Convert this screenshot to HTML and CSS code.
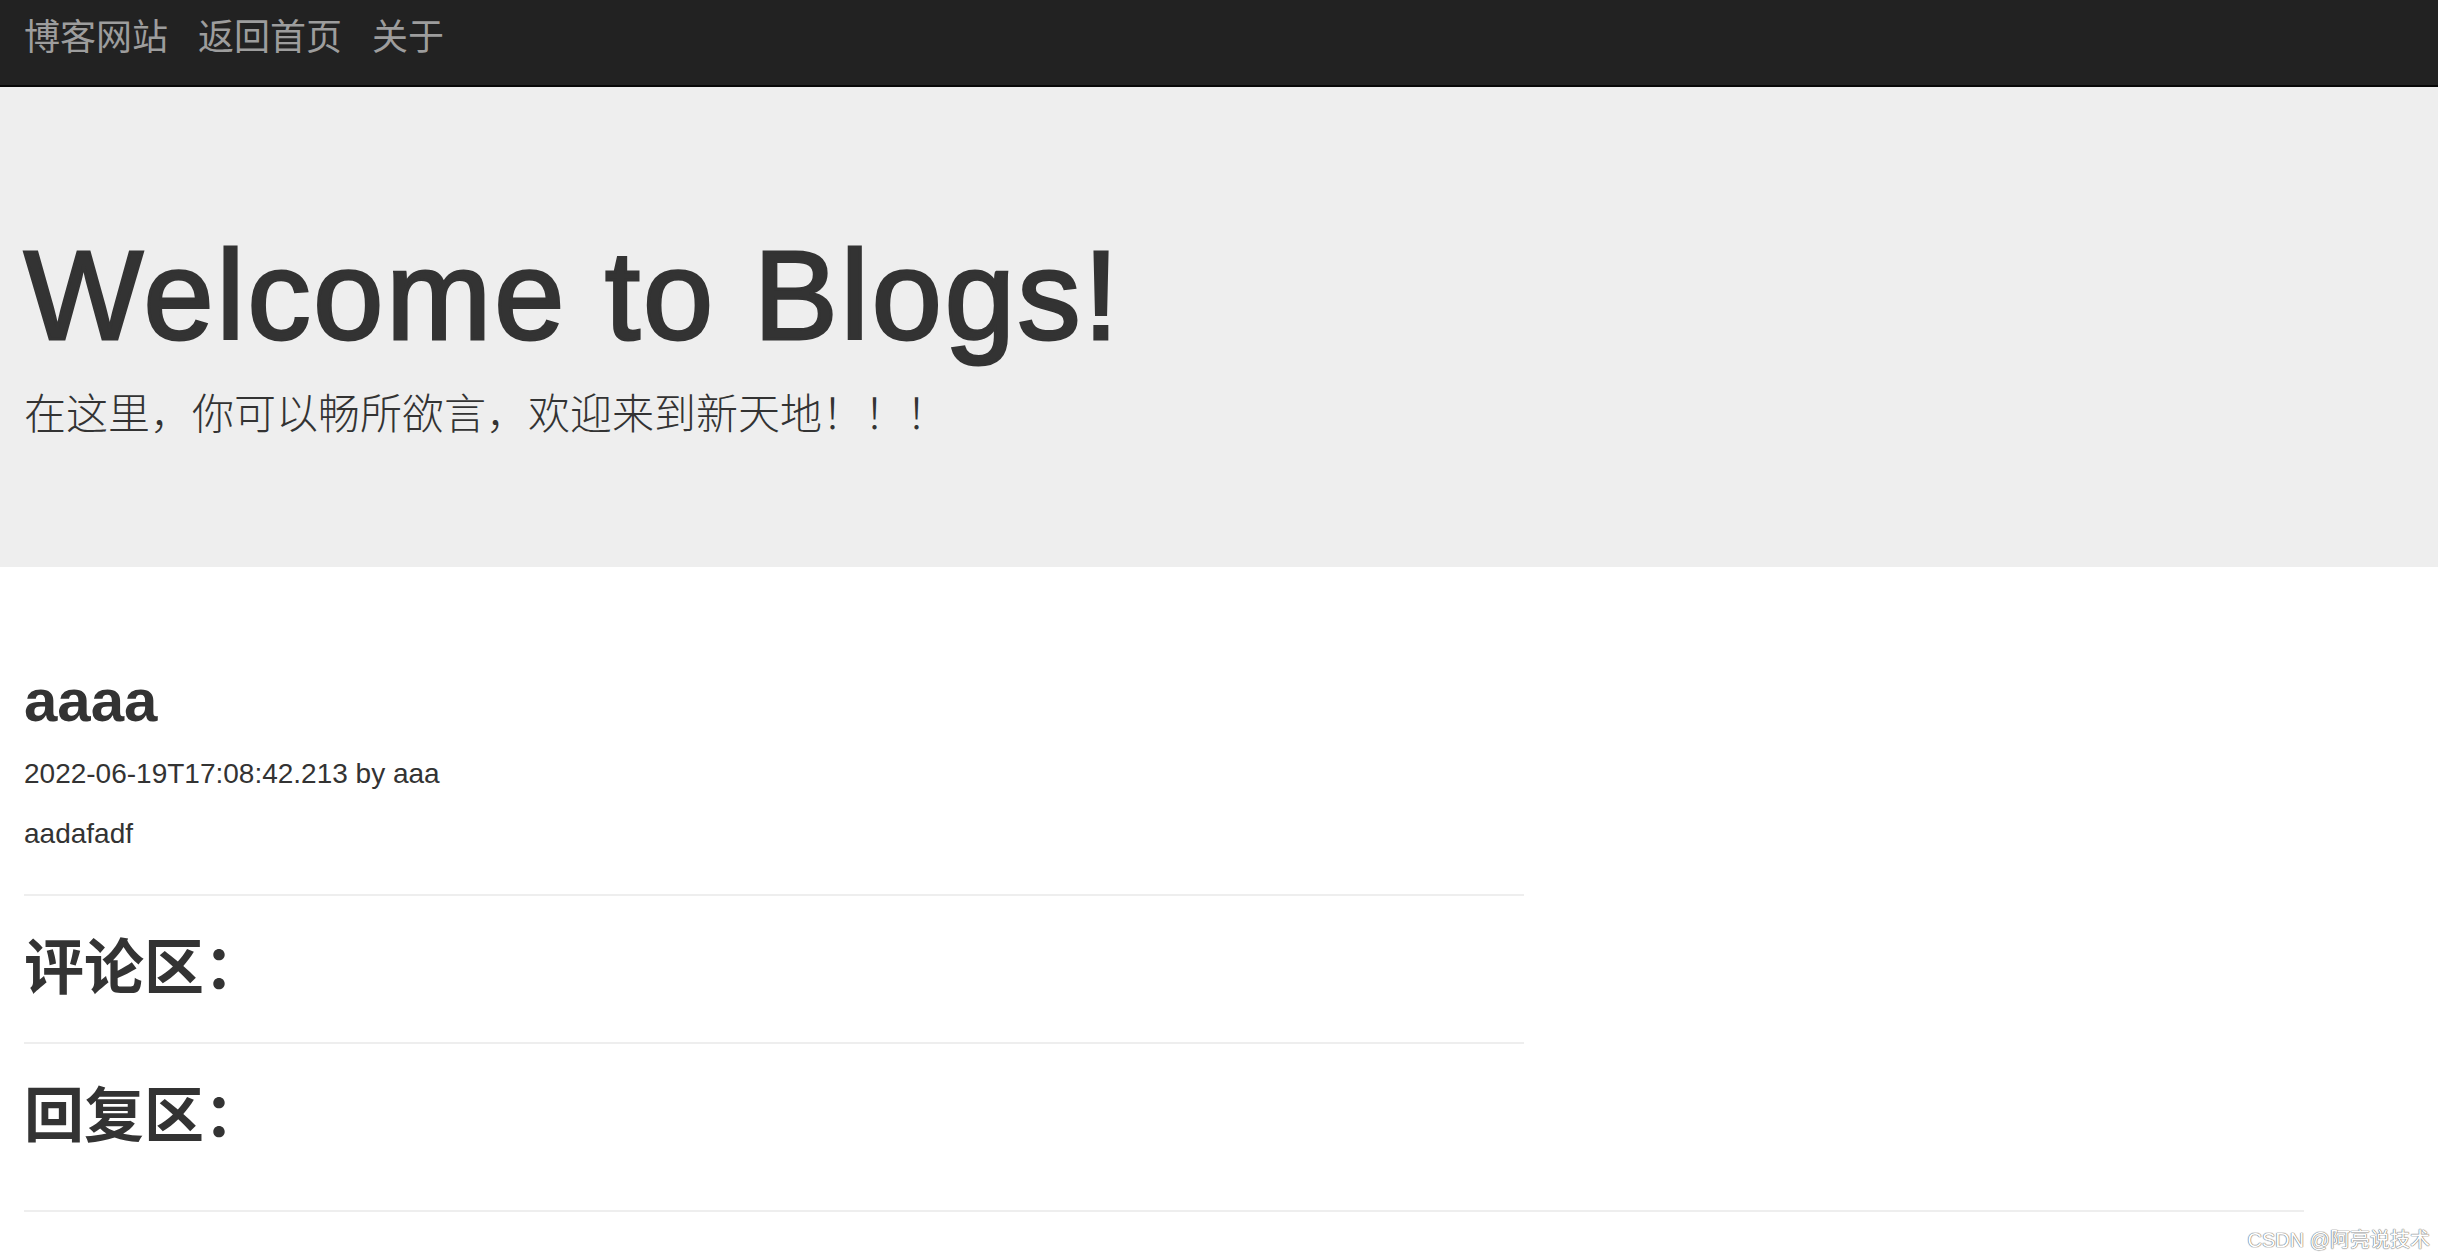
FILE: index.html
```html
<!DOCTYPE html>
<html lang="zh-CN">
<head>
<meta charset="utf-8">
<title>博客网站</title>
<link rel="stylesheet" href="styles.css">
</head>
<body>
<nav class="navbar">
  <a class="nav-item" href="#">博客网站</a>
  <a class="nav-item" href="#">返回首页</a>
  <a class="nav-item" href="#">关于</a>
</nav>
<header class="jumbotron">
  <h1 class="jumbo-title">Welcome to Blogs!</h1>
  <p class="jumbo-lead">在这里，你可以畅所欲言，欢迎来到新天地！！！</p>
</header>
<main class="page">
  <section class="post">
    <h2 class="heading">aaaa</h2>
    <p class="text">2022-06-19T17:08:42.213 by aaa</p>
    <p class="text">aadafadf</p>
    <hr class="rule">
    <h2 class="heading">评论区：</h2>
    <hr class="rule">
    <h2 class="heading">回复区：</h2>
    <div class="spacer"></div>
  </section>
  <hr class="rule rule-wide">
</main>
<div class="watermark">CSDN @阿亮说技术</div>
</body>
</html>
```

FILE: styles.css
```css
html, body {
  margin: 0;
  padding: 0;
}
body {
  position: relative;
  min-height: 1256px;
  background: #fff;
  color: #333;
  font-family: "Liberation Sans", Arial, "Noto Sans CJK SC", sans-serif;
}
.navbar {
  box-sizing: border-box;
  height: 87px;
  background: #222;
  border-bottom: 2px solid #080808;
  display: flex;
  align-items: center;
  padding: 0 0 18px 24px;
  gap: 30px;
}
.nav-item {
  color: #9d9d9d;
  text-decoration: none;
  font-family: "Noto Sans CJK SC", "Liberation Sans", sans-serif;
  font-size: 36px;
  line-height: 36px;
}
.jumbotron {
  background: #eee;
  padding: 96px 24px 92px;
}
.jumbo-title {
  margin: 43px 0 0;
  font-size: 126px;
  line-height: 139px;
  font-weight: 400;
  letter-spacing: 2.9px;
  color: #333;
  -webkit-text-stroke: 3px #333;
}
.jumbo-lead {
  margin: 20px 0 30px;
  font-family: "Liberation Sans", "Noto Sans CJK SC", sans-serif;
  font-size: 42px;
  line-height: 60px;
  font-weight: 300;
  color: #333;
}
.page {
  padding: 101px 0 0 24px;
}
.post {
  width: 1500px;
}
.heading {
  margin: 0 0 20px;
  font-size: 60px;
  line-height: 66px;
  font-weight: 700;
  color: #333;
}
.rule + .heading {
  margin-top: 40px;
}
.text {
  margin: 0 0 20px;
  font-size: 28px;
  line-height: 40px;
}
.rule {
  margin: 40px 0 0;
  border: 0;
  border-top: 2px solid #eee;
  height: 0;
}
.spacer {
  height: 40px;
}
.rule-wide {
  width: 2280px;
  margin-top: 0;
}
.watermark {
  position: absolute;
  right: 8px;
  bottom: 4px;
  font-size: 20px;
  line-height: 24px;
  color: #fff;
  text-shadow: 0 0 1px #777, 0 0 1px #777, 0 0 1px #777;
}
```
